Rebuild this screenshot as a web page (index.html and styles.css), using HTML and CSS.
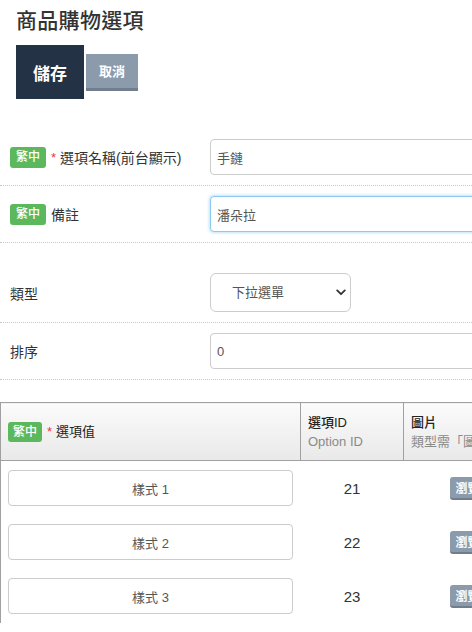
FILE: index.html
```html
<!DOCTYPE html>
<html lang="zh-Hant">
<head>
<meta charset="utf-8">
<link rel="stylesheet" href="styles.css">
</head>
<body>
<div class="page">
  <h1 class="title">商品購物選項</h1>
  <div class="actions">
    <button class="btn btn-save">儲存</button>
    <button class="btn btn-cancel">取消</button>
  </div>

  <div class="form">
    <div class="row">
      <div class="label"><span class="badge">繁中</span><span class="req">*</span>選項名稱(前台顯示)</div>
      <div class="field"><input class="input" type="text" value="手鏈"></div>
    </div>
    <div class="row">
      <div class="label"><span class="badge">繁中</span>備註</div>
      <div class="field"><input class="input focus" type="text" value="潘朵拉"></div>
    </div>
    <div class="row row-gap">
      <div class="label">類型</div>
      <div class="field">
        <div class="select-wrap">
          <select class="select"><option>下拉選單</option></select>
          <svg class="chev" width="10" height="7" viewBox="0 0 10 7"><path d="M1.2 1.4 L5 5.2 L8.8 1.4" fill="none" stroke="#333" stroke-width="1.8" stroke-linecap="round" stroke-linejoin="round"/></svg>
        </div>
      </div>
    </div>
    <div class="row">
      <div class="label">排序</div>
      <div class="field"><input class="input" type="text" value="0"></div>
    </div>
  </div>

  <table class="opts">
    <colgroup><col class="c1"><col class="c2"><col class="c3"></colgroup>
    <thead>
      <tr>
        <th><span class="badge badge-sm">繁中</span><span class="req">*</span>選項值</th>
        <th><div class="th-main">選項ID</div><div class="th-sub">Option ID</div></th>
        <th><div class="th-main">圖片</div><div class="th-sub">類型需「圖片」才會顯示</div></th>
      </tr>
    </thead>
    <tbody>
      <tr>
        <td><input class="opt-input" type="text" value="樣式 1"></td>
        <td class="id">21</td>
        <td class="img"><button class="btn-browse">瀏覽圖片</button></td>
      </tr>
      <tr>
        <td><input class="opt-input" type="text" value="樣式 2"></td>
        <td class="id">22</td>
        <td class="img"><button class="btn-browse">瀏覽圖片</button></td>
      </tr>
      <tr>
        <td><input class="opt-input" type="text" value="樣式 3"></td>
        <td class="id">23</td>
        <td class="img"><button class="btn-browse">瀏覽圖片</button></td>
      </tr>
    </tbody>
  </table>
</div>
</body>
</html>
```

FILE: styles.css
```css
html, body {
  margin: 0;
  padding: 0;
  background: #fff;
  overflow: hidden;
}
body {
  font-family: "Liberation Sans", "Noto Sans CJK TC", sans-serif;
  color: #333;
  width: 700px;
}
.page {
  padding: 0;
}
.title {
  margin: 0;
  padding: 8px 0 0 16px;
  font-size: 21px;
  font-weight: 500;
  line-height: 26px;
  color: #333;
  letter-spacing: 0.3px;
}
.actions {
  display: flex;
  align-items: center;
  gap: 2px;
  padding: 11px 0 0 16px;
}
.btn {
  border: 0;
  color: #fff;
  font-family: inherit;
  cursor: pointer;
  padding: 0;
}
.btn-save {
  width: 68px;
  height: 54px;
  background: #233345;
  font-size: 17px;
  font-weight: 700;
}
.btn-cancel {
  width: 52px;
  height: 37px;
  background: #8b9bac;
  border-bottom: 3px solid #707e8e;
  font-size: 13px;
  font-weight: 700;
}
.form {
  margin-top: 30px;
}
.row {
  display: flex;
  align-items: center;
  padding: 10px 0;
  border-bottom: 1px dotted #c8c8c8;
}
.row-gap {
  padding-top: 30px;
}
.label {
  width: 210px;
  flex: none;
  padding-left: 10px;
  box-sizing: border-box;
  font-size: 14px;
  display: flex;
  align-items: center;
  color: #333;
}
.badge {
  display: inline-block;
  background: #5cb85c;
  color: #fff;
  font-size: 12px;
  font-weight: 500;
  line-height: 21px;
  height: 21px;
  padding: 0 6px;
  border-radius: 3px;
  margin-right: 5px;
}
.badge-sm {
  line-height: 20px;
  height: 20px;
  padding: 0 5px;
}
.req {
  color: #e8343c;
  margin-right: 4px;
  font-size: 13px;
}
.field {
  flex: 1;
}
.input {
  width: 400px;
  height: 36px;
  box-sizing: border-box;
  border: 1px solid #ccc;
  border-radius: 4px;
  padding: 0 6px;
  font-family: inherit;
  font-size: 13px;
  color: #555;
  outline: none;
  display: block;
}
.input.focus {
  border-color: #8ccaf0;
  box-shadow: 0 0 3px 1px rgba(140, 200, 240, 0.55);
}
.select-wrap {
  position: relative;
  width: 141px;
  height: 39px;
}
.select {
  appearance: none;
  -webkit-appearance: none;
  width: 141px;
  height: 39px;
  border: 1px solid #ccc;
  border-radius: 6px;
  background: #fff;
  padding: 0 0 0 21px;
  font-family: inherit;
  font-size: 13px;
  color: #555;
  outline: none;
}
.chev {
  position: absolute;
  right: 5px;
  top: 16px;
  pointer-events: none;
}
.opts {
  margin-top: 22px;
  border-collapse: collapse;
  table-layout: fixed;
  width: 640px;
  border: 1px solid #a0a0a0;
  border-bottom: 0;
}
.c1 { width: 300px; }
.c2 { width: 103px; }
.c3 { width: 237px; }
.opts th {
  height: 57px;
  padding: 0 7px;
  text-align: left;
  font-weight: 400;
  font-size: 13px;
  background: linear-gradient(#fbfbfb, #e9e9e9);
  border: 1px solid #a0a0a0;
  vertical-align: middle;
  color: #222;
}
.opts th:first-child {
  padding-left: 7px;
  font-size: 13px;
}
.opts th:first-child .badge {
  vertical-align: middle;
}
.th-main {
  line-height: 19px;
  font-weight: 500;
}
.th-sub {
  line-height: 19px;
  color: #8a8a8a;
}
.opts td {
  padding: 9px 7px;
  height: 36px;
  vertical-align: middle;
}
.opt-input {
  width: 285px;
  height: 36px;
  box-sizing: border-box;
  border: 1px solid #ccc;
  border-radius: 4px;
  text-align: center;
  font-family: inherit;
  font-size: 13px;
  color: #555;
  outline: none;
  display: block;
}
.id {
  text-align: center;
  font-size: 15px;
  color: #333;
}
.opts td.img {
  padding-left: 46px;
}
.btn-browse {
  height: 23px;
  width: 70px;
  border: 0;
  border-bottom: 2px solid #6f7d8c;
  border-radius: 3px;
  background: #8b9bac;
  color: #fff;
  font-family: inherit;
  font-size: 12px;
  font-weight: 700;
  padding: 0 0 0 6px;
  text-align: left;
  display: block;
}
```
